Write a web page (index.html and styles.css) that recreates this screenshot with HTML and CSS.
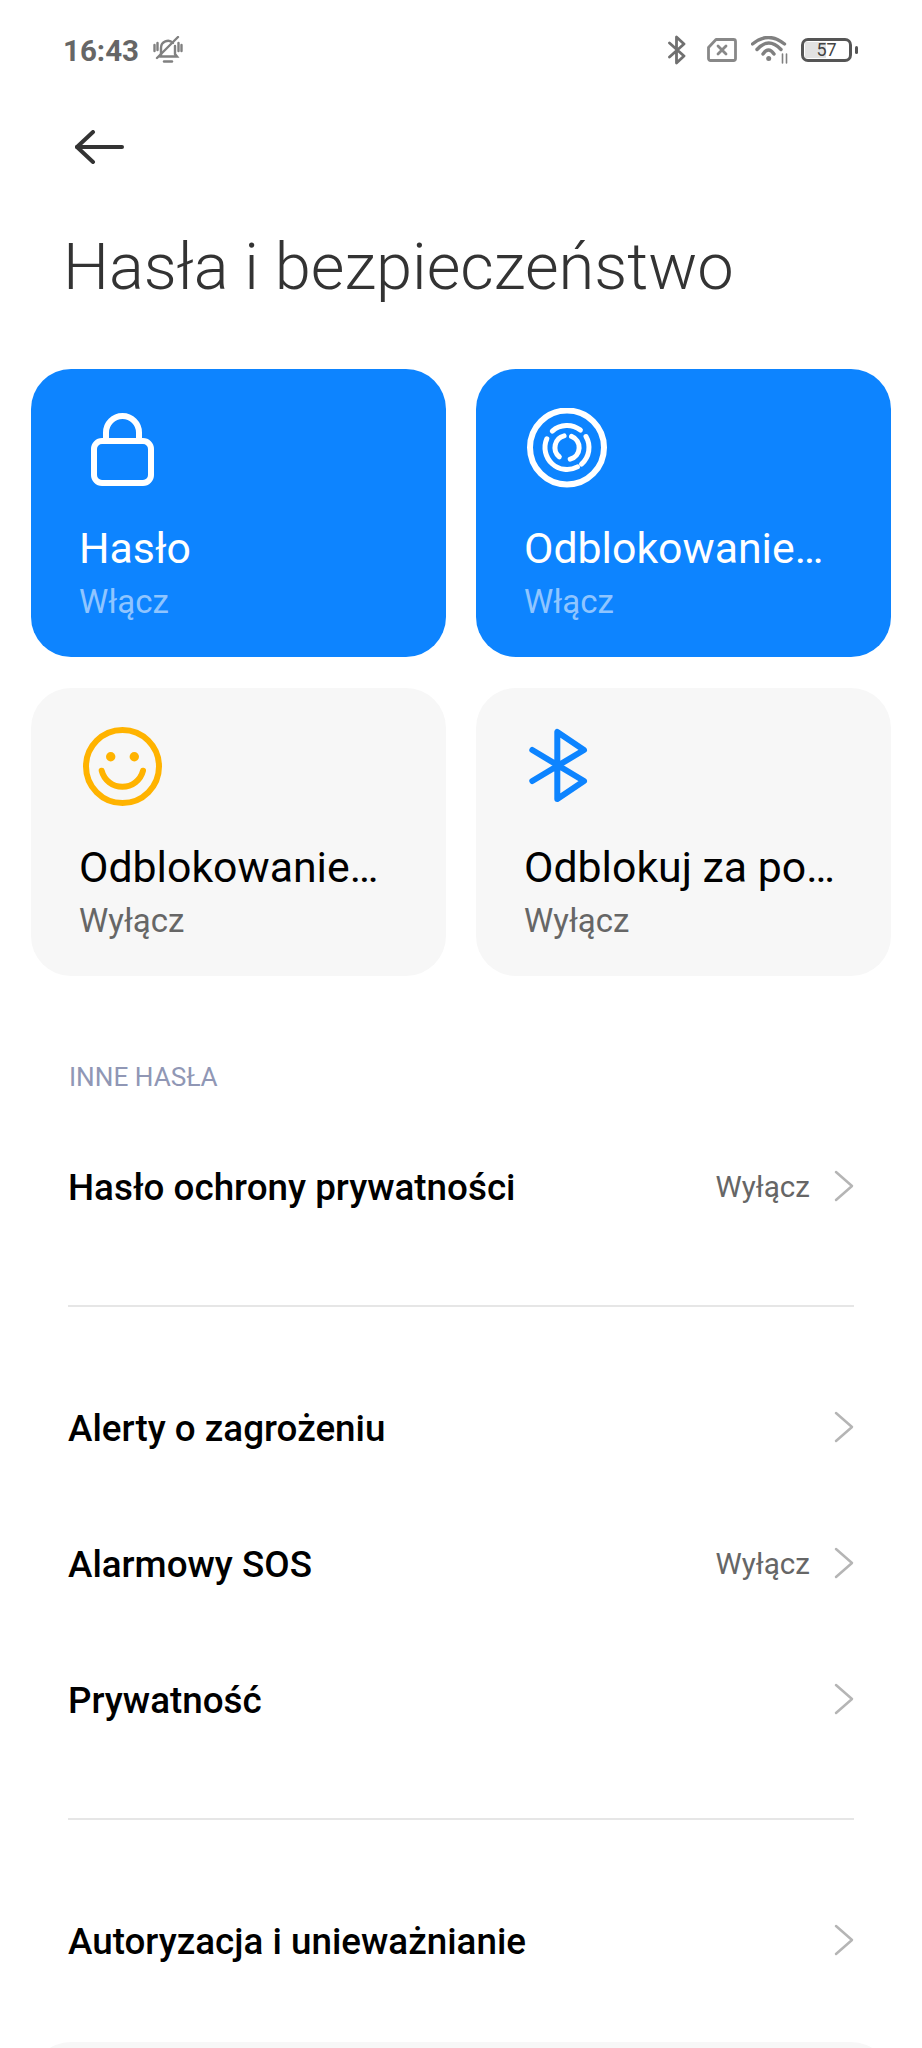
FILE: index.html
```html
<!DOCTYPE html>
<html lang="pl">
<head>
  <meta charset="UTF-8" />
  <meta name="viewport" content="width=device-width, initial-scale=1.0"/>
  <title>Hasła i bezpieczeństwo</title>
  <link rel="stylesheet" href="styles.css">
</head>
<body>

  <div class="status-bar">
    <div class="status-left">
      <span class="time">16:43</span>
      <svg class="bell" viewBox="0 0 30 28" fill="none" stroke="#808080" stroke-width="2.400" stroke-linecap="round">
        <path d="M8 19 V12 a7 7 0 0 1 12 -5 M22 10 V18 l2 2.500 H7"/>
        <path d="M11 25.500 H19"/>
        <path d="M4 22 L25 1"/>
        <path d="M1.500 9 V15 M4.500 7 V14 M25.500 7 V15 M28.500 9 V15"/>
      </svg>
    </div>
    <div class="status-right">
      <svg class="st-bt" viewBox="0 0 18 30" fill="none" stroke="#707070" stroke-width="2.800" stroke-linecap="round" stroke-linejoin="round">
        <path d="M1.500 22 L16 9 L8.500 2 V28 L16 21 L1.500 8"/>
      </svg>
      <svg class="st-sim" viewBox="0 0 30 24" fill="none" stroke="#888" stroke-width="2.800" stroke-linecap="round" stroke-linejoin="round">
        <path d="M9 1.500 H26.500 a2 2 0 0 1 2 2 V20.500 a2 2 0 0 1 -2 2 H3.500 a2 2 0 0 1 -2 -2 V9.500 Z"/>
        <path d="M11 8 L19 16 M19 8 L11 16"/>
      </svg>
      <svg class="st-wifi" viewBox="0 0 37 28" fill="none" stroke="#808080" stroke-width="3.400" stroke-linecap="round">
        <path d="M1.500 8 Q17.500 -5 33.500 8"/>
        <path d="M6 13.500 Q17.500 0.500 30 13.500"/>
        <path d="M12 18 Q17.500 10 23 18"/>
        <circle cx="17.700" cy="22.500" r="2.500" fill="#808080" stroke="none"/>
        <path stroke-width="1.600" d="M31.500 18 V27 M35.500 18 V27"/>
      </svg>
      <div class="battery">
        <div class="battery-body">
          <div class="battery-fill"></div>
          <span class="battery-num">57</span>
        </div>
        <div class="battery-nub"></div>
      </div>
    </div>
  </div>

  <div class="nav">
    <svg class="back" viewBox="0 0 50 34" fill="none" stroke="#333" stroke-width="4" stroke-linecap="round" stroke-linejoin="round">
      <path d="M18 2 L2 17 L18 32"/>
      <path d="M2 17 H47"/>
    </svg>
  </div>

  <h1 class="title">Hasła i bezpieczeństwo</h1>

  <div class="cards">
    <div class="card card-on">
      <svg class="card-icon" viewBox="0 0 84 84" fill="none" stroke="#fff" stroke-width="6">
        <rect x="14" y="33" width="57" height="42" rx="8"/>
        <path d="M26 33 V24.500 a16.500 16.500 0 0 1 33 0 V33"/>
      </svg>
      <div class="card-title">Hasło</div>
      <div class="card-sub">Włącz</div>
    </div>
    <div class="card card-on">
      <svg class="card-icon" viewBox="0 0 84 84" fill="none" stroke="#fff" stroke-width="5" stroke-linecap="round">
        <circle cx="42" cy="39.500" r="37" stroke-width="6"/>
        <path d="M27.300 23.100 A22 22 0 0 1 55.400 22.100"/>
        <path d="M21.800 30.800 A22 22 0 0 0 52.400 58.900"/>
        <path d="M61 28.500 A22 22 0 0 1 56.500 56.100"/>
        <path d="M39.100 27.900 A12 12 0 0 0 34.300 48.800"/>
        <path d="M46.500 28.300 A12 12 0 0 1 45.200 51.100"/>
      </svg>
      <div class="card-title">Odblokowanie…</div>
      <div class="card-sub">Włącz</div>
    </div>
    <div class="card">
      <svg class="card-icon" viewBox="0 0 84 84" fill="none" stroke="#ffb300" stroke-width="6" stroke-linecap="round">
        <circle cx="42.500" cy="39.500" r="36.500"/>
        <circle cx="30.700" cy="29.700" r="4.700" fill="#ffb300" stroke="none"/>
        <circle cx="54.300" cy="29.700" r="4.700" fill="#ffb300" stroke="none"/>
        <path d="M21.700 43.700 A21.300 21.300 0 0 0 63 43.700"/>
      </svg>
      <div class="card-title">Odblokowanie…</div>
      <div class="card-sub">Wyłącz</div>
    </div>
    <div class="card">
      <svg class="card-icon" viewBox="0 0 84 84" fill="none" stroke="#0d84ff" stroke-width="6" stroke-linecap="round" stroke-linejoin="round">
        <path d="M7.300 54 L59 23 L32.300 5 V72 L59 54 L7.300 23"/>
      </svg>
      <div class="card-title">Odblokuj za po…</div>
      <div class="card-sub">Wyłącz</div>
    </div>
  </div>

  <div class="section-label">INNE HASŁA</div>

  <div class="row">
    <span class="row-name">Hasło ochrony prywatności</span>
    <span class="row-value">Wyłącz</span>
    <svg class="chevron" viewBox="0 0 20 32" fill="none" stroke="#b5b5b5" stroke-width="2.500" stroke-linecap="round" stroke-linejoin="round"><path d="M2 2 L18 16 L2 30"/></svg>
  </div>

  <div class="divider"></div>

  <div class="row">
    <span class="row-name">Alerty o zagrożeniu</span>
    <svg class="chevron" viewBox="0 0 20 32" fill="none" stroke="#b5b5b5" stroke-width="2.500" stroke-linecap="round" stroke-linejoin="round"><path d="M2 2 L18 16 L2 30"/></svg>
  </div>
  <div class="row">
    <span class="row-name">Alarmowy SOS</span>
    <span class="row-value">Wyłącz</span>
    <svg class="chevron" viewBox="0 0 20 32" fill="none" stroke="#b5b5b5" stroke-width="2.500" stroke-linecap="round" stroke-linejoin="round"><path d="M2 2 L18 16 L2 30"/></svg>
  </div>
  <div class="row">
    <span class="row-name">Prywatność</span>
    <svg class="chevron" viewBox="0 0 20 32" fill="none" stroke="#b5b5b5" stroke-width="2.500" stroke-linecap="round" stroke-linejoin="round"><path d="M2 2 L18 16 L2 30"/></svg>
  </div>

  <div class="divider"></div>

  <div class="row">
    <span class="row-name">Autoryzacja i unieważnianie</span>
    <svg class="chevron" viewBox="0 0 20 32" fill="none" stroke="#b5b5b5" stroke-width="2.500" stroke-linecap="round" stroke-linejoin="round"><path d="M2 2 L18 16 L2 30"/></svg>
  </div>

  <div class="bottom-clip">
    <div class="bottom-card"></div>
  </div>

</body>
</html>
```
FILE: styles.css
```css
html {
  background-color: #fff;
}

body {
  font-family: Roboto, "Liberation Sans", sans-serif;
  background-color: #fff;
  color: #000;
  margin: 0;
  padding: 0;
  width: 922px;
  height: 2048px;
  overflow: hidden;
}

.status-bar {
  height: 100px;
  padding: 0 64px 0 63px;
  display: flex;
  justify-content: space-between;
  align-items: center;
}

.status-left {
  display: flex;
  align-items: center;
}

.time {
  font-size: 29.500px;
  font-weight: 700;
  color: #666;
  width: 90px;
  padding-top: 2px;
}

.bell {
  width: 30px;
  height: 28px;
}

.status-right {
  display: flex;
  align-items: center;
}

.st-bt {
  width: 18px;
  height: 30px;
  margin-right: 21px;
}

.st-sim {
  width: 30px;
  height: 24px;
  margin-right: 14px;
}

.st-wifi {
  width: 37px;
  height: 28px;
  margin-right: 13px;
}

.battery {
  display: flex;
  align-items: center;
}

.battery-body {
  width: 51px;
  height: 24px;
  box-sizing: border-box;
  border: 3.500px solid #555;
  border-radius: 7px;
  position: relative;
  display: flex;
  align-items: center;
  justify-content: center;
}

.battery-fill {
  position: absolute;
  left: 1px;
  top: 1px;
  bottom: 1px;
  width: 21px;
  background-color: #e2e2e2;
}

.battery-num {
  position: relative;
  font-size: 18px;
  color: #444;
  line-height: 1;
}

.battery-nub {
  width: 3px;
  height: 8px;
  margin-left: 3px;
  background-color: #555;
  border-radius: 2px;
}

.nav {
  height: 77px;
  padding: 30px 0 0 75px;
  box-sizing: border-box;
}

.back {
  display: block;
  width: 50px;
  height: 34px;
}

.title {
  margin: 0;
  padding-left: 63px;
  height: 192px;
  font-size: 65px;
  font-weight: 300;
  line-height: 180px;
  color: #333;
}

.cards {
  display: grid;
  grid-template-columns: 415px 415px;
  grid-auto-rows: 288px;
  gap: 31px 30px;
  padding: 0 31px;
}

.card {
  background-color: #f7f7f7;
  border-radius: 40px;
  padding: 39px 0 0 49px;
  box-sizing: border-box;
}

.card-on {
  background-color: #0d84ff;
}

.card-icon {
  display: block;
  width: 84px;
  height: 84px;
}

.card-title {
  margin: 26px 0 0 -1px;
  font-size: 42.800px;
  line-height: 60px;
  color: #000;
}

.card-sub {
  margin-left: -1px;
  font-size: 33px;
  line-height: 48px;
  color: #666;
}

.card-on .card-title {
  color: #fff;
}

.card-on .card-sub {
  color: #8fc5ff;
}

.section-label {
  margin-top: 82px;
  padding-left: 69px;
  height: 61px;
  font-size: 26.200px;
  line-height: 38px;
  color: #9097b5;
}

.row {
  height: 136px;
  padding: 0 68px 0 68px;
  display: flex;
  align-items: center;
}

.row-name {
  flex: 1;
  font-size: 36.800px;
  font-weight: 500;
  color: #000;
}

.row-value {
  font-size: 29.600px;
  color: #666;
  margin-right: 24px;
}

.chevron {
  width: 20px;
  height: 32px;
  margin-bottom: 2px;
}

.divider {
  height: 2px;
  margin: 50px 68px 53px 68px;
  background-color: #e6e6e6;
}

.bottom-clip {
  margin: 33px 31px 0;
  height: 6px;
  overflow: hidden;
}

.bottom-card {
  height: 288px;
  background-color: #f7f7f7;
  border-radius: 40px;
}
```
